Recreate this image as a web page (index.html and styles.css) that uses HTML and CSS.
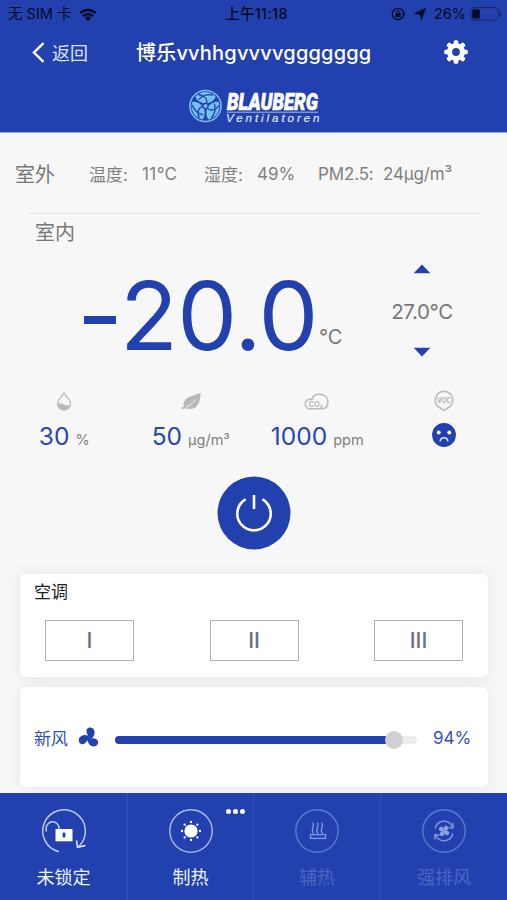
FILE: index.html
```html
<!DOCTYPE html>
<html lang="zh-CN">
<head>
<meta charset="utf-8">
<title>博乐</title>
<link rel="stylesheet" href="styles.css">
</head>
<body>
<div class="app">
  <header class="header">
    <div class="status">
      <div class="status-left">
        <span class="carrier">无 SIM 卡</span>
        <svg class="wifi" width="18" height="13" viewBox="0 0 18 13"><g fill="none" stroke="#050b22" stroke-width="2.4"><path d="M1.2 5.2A11 11 0 0 1 16.8 5.2"/><path d="M4 8.2a7 7 0 0 1 10 0"/></g><path d="M9 13L5.9 9.900a4.400 4.400 0 0 1 6.200 0z" fill="#050b22"/></svg>
      </div>
      <div class="status-time">上午11:18</div>
      <div class="status-right">
        <svg width="15" height="14" viewBox="0 0 15 14"><circle cx="7" cy="7" r="5.7" fill="none" stroke="#050b22" stroke-width="1.3"/><rect x="4.4" y="6" width="5.2" height="4" rx=".6" fill="#050b22"/><path d="M5.4 6V5a1.6 1.6 0 0 1 3.2 0v1" fill="none" stroke="#050b22"/><path d="M10.7 6.2h4.2l-2.1 2.800z" fill="#050b22"/></svg>
        <svg class="locate" width="12" height="12" viewBox="0 0 12 12"><path d="M11.700.3L7.300 11.800 6.300 6.400.3 5.500z" fill="#050b22" stroke="#050b22" stroke-width=".6"/></svg>
        <span class="percent">26%</span>
        <svg width="32" height="14" viewBox="0 0 32 14"><rect x=".6" y=".6" width="28" height="12.6" rx="3.4" fill="none" stroke="#17265f" stroke-width="1"/><rect x="2.2" y="2.2" width="7.6" height="9.4" rx="1.5" fill="#050b22"/><path d="M30 4.7c2 .8 2 3.800 0 4.600z" fill="#17265f"/></svg>
      </div>
    </div>
    <div class="titlebar">
      <div class="back">
        <svg width="13" height="21" viewBox="0 0 13 21"><path d="M11.500 1.200L2 10.500l9.500 9.300" fill="none" stroke="#fff" stroke-width="2.400"/></svg>
        <span>返回</span>
      </div>
      <h1 class="title">博乐vvhhgvvvvggggggg</h1>
      <svg class="gear" width="24" height="24" viewBox="-12 -12 24 24"><g fill="#fff"><g id="teeth"><rect x="-2.300" y="-11.800" width="4.600" height="23.600" rx="1.500"/><rect x="-11.800" y="-2.300" width="23.600" height="4.600" rx="1.500"/></g><use href="#teeth" transform="rotate(45)"/><circle r="9"/></g><circle r="3.900" fill="#2341ae"/></svg>
    </div>
    <div class="brand">
      <svg width="132" height="36" viewBox="0 0 132 36">
        <circle cx="17.500" cy="18" r="15.600" fill="none" stroke="#75c0ed" stroke-width="1.500"/>
        <g fill="#75c0ed">
          <path id="blade" d="M17.500 16C11.500 14.500 7.500 11 7.500 8.500 10 5.500 14 4 17.500 4s7.500 1.500 10 4.500c0 2.500-4 6-10 7.500z"/>
          <use href="#blade" transform="rotate(120 17.500 18)"/>
          <use href="#blade" transform="rotate(240 17.500 18)"/>
        </g>
        <g fill="none" stroke="#2341ae" stroke-width="1.300">
          <path id="seam" d="M10 6.500C15.500 7 20 10.500 18.500 16M11 11.500c3-3.500 8-5.500 14-4.500"/>
          <use href="#seam" transform="rotate(120 17.500 18)"/>
          <use href="#seam" transform="rotate(240 17.500 18)"/>
        </g>
        <circle cx="17.500" cy="18" r="2.600" fill="#75c0ed" stroke="#2341ae" stroke-width="1.200"/>
        <text class="brand-name" x="39" y="22" textLength="91" lengthAdjust="spacingAndGlyphs">BLAUBERG</text>
        <path d="M39 24.200h91" stroke="#c9d8f4" stroke-width=".8"/>
        <text class="brand-sub" x="38" y="34" textLength="93.500">Ventilatoren</text>
      </svg>
    </div>
  </header>

  <main class="main">
    <section class="outdoor">
      <span class="room">室外</span>
      <span>温度:</span><span class="c-temp">11°C</span>
      <span>湿度:</span><span>49%</span>
      <span class="c-pm">PM2.5:</span><span class="c-pmv">24µg/m³</span>
    </section>
    <section class="indoor">
      <div class="room indoor-name">室内</div>
      <div class="temps">
        <div class="current"><span class="big"><i class="minus"></i>20.0</span><span class="deg">°C</span></div>
        <div class="target">
          <svg width="18" height="10" viewBox="0 0 18 10"><path d="M.7 9.300L9 .6l8.300 8.700z" fill="#2341ae"/></svg>
          <span>27.0°C</span>
          <svg width="18" height="10" viewBox="0 0 18 10"><path d="M.7.7L9 9.400 17.300.7z" fill="#2341ae"/></svg>
        </div>
      </div>
    </section>

    <section class="metrics">
      <div class="metric">
        <svg width="26" height="22" viewBox="0 0 26 22"><path d="M13 3C10.500 6.800 6.500 10 6.500 13.500a6.500 6.500 0 0 0 13 0C19.500 10 15.500 6.800 13 3z" fill="none" stroke="#c2c2c2" stroke-width="1.500"/><path d="M7 13.500c3.500-1 7 3 12 1.500-.8 3.200-3 5-6 5s-5.700-2-6-6.500z" fill="#b9b9b9"/></svg>
        <p><b>30</b><small>%</small></p>
      </div>
      <div class="metric">
        <svg width="26" height="22" viewBox="0 0 26 22"><path d="M22.700 2.800C22.300 10 20.500 19 12.500 19c-2 0-3.500-.4-4.700-1-1.500 1-3 1.300-4.500 1l.2-1.700c1.200 0 1.800-.2 2.500-.7C4.200 12.500 7.500 8.500 11.500 6.700c4-1.700 7.500-1.600 11.200-3.900z" fill="#b8b8b8"/><path d="M8 17c4-1.500 7-4 9.500-7.500" fill="none" stroke="#f7f7f7"/></svg>
        <p><b>50</b><small>µg/m³</small></p>
      </div>
      <div class="metric">
        <svg width="26" height="22" viewBox="0 0 26 22"><path d="M6.300 18.800a4.800 4.800 0 0 1-.5-9.600c.9-.1 1.500 0 2.200.3C8.600 6.300 11.200 4.200 15 4.200c5.400 0 9 3 9 7.600 0 4-2 7-6 7z" fill="none" stroke="#bababa" stroke-width="1.500"/><text class="icon-text" x="4.800" y="16.500" textLength="14">CO₂</text></svg>
        <p><b>1000</b><small>ppm</small></p>
      </div>
      <div class="metric voc">
        <svg width="26" height="22" viewBox="0 0 26 22"><path d="M13 1.200a8.900 8.900 0 0 1 2.800 17.300L13 20.300l-2.800-1.800A8.900 8.900 0 0 1 13 1.200z" fill="none" stroke="#bababa" stroke-width="1.500"/><text class="icon-text" x="6" y="12.600" textLength="14" lengthAdjust="spacingAndGlyphs">VOC</text></svg>
        <svg class="face" width="24" height="24" viewBox="0 0 24 24"><circle cx="12" cy="12" r="11.900" fill="#2341ae"/><circle cx="6.700" cy="9.500" r="2" fill="#fff"/><circle cx="17.300" cy="9.500" r="2" fill="#fff"/><path d="M8.200 18.400c0-5 7.600-5 7.600 0" fill="none" stroke="#dce3f8" stroke-width="1.500"/></svg>
      </div>
    </section>

    <div class="power">
      <svg width="74" height="74" viewBox="-37 -37 74 74"><circle r="36.500" fill="#2341ae"/><path d="M-9.300-13.200a16.700 16.700 0 1 0 18.600 0" fill="none" stroke="#fff" stroke-width="2.600" stroke-linecap="round"/><path d="M0-18v14" stroke="#fff" stroke-width="2.600"/></svg>
    </div>

    <section class="card ac">
      <h2>空调</h2>
      <div class="levels"><button>I</button><button>II</button><button>III</button></div>
    </section>
    <section class="card fresh">
      <span class="fresh-name">新风</span>
      <svg width="22" height="22" viewBox="-11 -11 22 22"><g fill="#2341ae"><path id="fan" d="M.8 1.200C-.3-1.500-2.600-4.500-2.600-7-2.500-9.800-.3-11 2-10.400 5.200-9.600 6.200-6.500 5.200-3.300 4.500-.8 2.700.4.8 1.200z"/><use href="#fan" transform="rotate(120)"/><use href="#fan" transform="rotate(240)"/></g></svg>
      <div class="slider"><div class="fill"></div><div class="knob"></div></div>
      <span class="fresh-value">94%</span>
    </section>
  </main>

  <nav class="nav">
    <div class="tab">
      <svg width="46" height="46" viewBox="-23 -23 46 46"><g fill="none" stroke="#bdc9ef" stroke-width="1.500"><path d="M-5 20.800A21.300 21.300 0 1 1 15 15.300"/><path d="M12.500 9.500l1 6.800 8-1.800" stroke="#e6ecff"/><path d="M-17.800.5v-3.300a6.400 6.400 0 0 1 12.800 0V1"/></g><rect x="-8.500" y="-2" width="17" height="12.300" fill="#fff"/><ellipse cy="4" rx="1.600" ry="2.700" fill="#2341ae"/></svg>
      <span>未锁定</span>
    </div>
    <div class="tab">
      <svg width="46" height="46" viewBox="-23 -23 46 46"><circle r="21.200" fill="none" stroke="#a9b8e8" stroke-width="1.400"/><circle r="6.600" fill="#fff"/><g fill="#fff"><g id="rays"><circle cy="-9" r="1.150"/><circle cy="9" r="1.150"/><circle cx="-9" r="1.150"/><circle cx="9" r="1.150"/></g><use href="#rays" transform="rotate(45)"/></g></svg>
      <span>制热</span>
      <i class="more"></i>
    </div>
    <div class="tab off">
      <svg width="46" height="46" viewBox="-23 -23 46 46"><g fill="none" stroke="#5f79cd" stroke-width="1.400"><circle r="21.200"/><g stroke="#8096dd"><rect x="-6.500" y="3.600" width="15" height="3.800"/><path d="M-3.500 2.500c-3.500-4 1.600-6.500-.5-11M1 2.500c-3.500-4 1.600-6.500-.5-11M5.500 2.500c-3.500-4 1.600-6.500-.5-11"/></g></g></svg>
      <span>辅热</span>
    </div>
    <div class="tab off">
      <svg width="46" height="46" viewBox="-23 -23 46 46"><circle r="21.200" fill="none" stroke="#5f79cd" stroke-width="1.400"/><g fill="none" stroke="#7c93dc" stroke-width="1.500"><path d="M-8.800-2.500A9 9 0 0 1 8.300-4.200M9-8v5l-4.500-.6M8.800 2.500A9 9 0 0 1-8.300 4.200M-9 8.600v-5l4.500.6"/></g><g fill="#8ea3e4" transform="rotate(40)"><path id="vane" d="M0 0C-3-1.500-3.500-4.500-1-5.800 2-6.200 3-3 0 0z"/><use href="#vane" transform="rotate(90)"/><use href="#vane" transform="rotate(180)"/><use href="#vane" transform="rotate(270)"/></g></svg>
      <span>强排风</span>
    </div>
  </nav>
</div>
</body>
</html>
```

FILE: styles.css
```css
* { box-sizing: border-box; }
body { margin: 0; background: #f7f7f7; font-family: Inter, "Noto Sans CJK SC", sans-serif; }
svg { display: block; flex: none; overflow: visible; }
h1, h2, p { margin: 0; }
.app { width: 507px; height: 900px; display: flex; flex-direction: column; overflow: hidden; }

.header { height: 133px; background: #2341ae; border-bottom: 1px solid #91a2da; flex: none; }
.status { height: 28px; display: grid; grid-template-columns: 1fr auto 1fr; align-items: center; color: #050b22; font-size: 14.500px; padding: 0 5px 0 8px; line-height: 28px; }
.status-left, .status-right { display: flex; align-items: center; }
.status-left { gap: 8px; }
.status-right { justify-content: flex-end; }
.status-time { font-weight: 500; font-size: 14.500px; padding-left: 3px; letter-spacing: .3px; }
.locate { margin: 0 8px 0 8px; }
.percent { margin-right: 4px; font-size: 14.500px; }
.titlebar { height: 48px; display: grid; grid-template-columns: 104px 268px 1fr; align-items: center; padding-left: 32px; color: #fff; }
.back { display: flex; align-items: center; gap: 7px; font-size: 18px; color: #dde4fa; }
.title { font-size: 20px; font-weight: 500; line-height: 28px; padding-top: 2px; white-space: nowrap; letter-spacing: .2px; }
.gear { margin-left: 40px; }
.brand { display: flex; padding: 12px 0 0 188px; }
.brand-name { font: italic 900 24px "Roboto", sans-serif; fill: #fff; stroke: #fff; stroke-width: .6px; }
.brand-sub { font: italic 400 11.500px "Liberation Sans", sans-serif; fill: #dce6fb; stroke: #dce6fb; stroke-width: .2px; }

.main { flex: 1; }
.outdoor { height: 80px; margin: 0 28px 0 15px; padding-top: 1px; display: grid; grid-template-columns: 74px 53px 62px 53px 61px 65px auto; align-items: center; font-size: 17px; color: #808080; white-space: nowrap; }
.outdoor .c-temp { letter-spacing: .4px; }
.outdoor .c-pm, .outdoor .c-pmv { letter-spacing: -.15px; }
.room { font-size: 20px; color: #777; }
.indoor { margin: 0 27px 0 28px; border-top: 1px solid #e3e3e3; height: 170px; }
.indoor-name { padding: 4px 0 0 7px; line-height: 30px; height: 34px; }
.temps { display: flex; justify-content: space-between; }
.current { display: flex; align-items: flex-end; height: 118px; padding-left: 56px; }
.big { display: flex; align-items: center; font-size: 95px; line-height: 100px; color: #2341ae; letter-spacing: -.6px; }
.minus { width: 32px; height: 8px; margin: 7px 4px 0 0; background: #2341ae; }
.deg { font-size: 20px; color: #777; line-height: 30px; margin: 0 0 14px 1px; }
.target { display: flex; flex-direction: column; align-items: center; width: 80px; margin: 16px 18px 0 0; font-size: 20.500px; line-height: 24px; color: #777; }
.target span { margin: 26px 0 23px; white-space: nowrap; letter-spacing: -.4px; }

.metrics { display: grid; grid-template-columns: repeat(4, 1fr); padding: 7px 0 0 1px; height: 92px; }
.metric { display: flex; flex-direction: column; align-items: center; }
.metric p { display: flex; align-items: baseline; gap: 6px; line-height: 30px; margin-top: 9px; color: #808080; }
.metric b { font-weight: 400; font-size: 24.500px; color: #2a46b0; }
.metric small { font-size: 14.500px; }
.face { margin-top: 11px; }
.icon-text { font: 700 7px Inter, sans-serif; fill: #b5b5b5; }
.power { height: 99px; padding-top: 1px; display: flex; justify-content: center; }

.card { width: 468px; margin: 0 19px 10px 20px; background: #fff; border-radius: 6px; box-shadow: 0 0 16px rgba(0, 0, 0, .07); }
.ac { height: 103px; padding: 4px 25px 0; }
.ac h2 { margin-left: -11px; font-size: 17px; font-weight: 400; line-height: 28px; color: #222; }
.levels { display: flex; justify-content: space-between; padding-top: 14px; }
.levels button { width: 89px; height: 41px; border: 1px solid #b1b1b1; background: #fff; font: 500 21.500px Inter, sans-serif; color: #6c7080; padding: 0 0 2px; }
.fresh { height: 100px; display: flex; align-items: center; padding: 1px 0 0 14px; margin-bottom: 6px; color: #3550b6; font-size: 17px; }
.fresh-name { width: 44px; }
.slider { position: relative; width: 302px; height: 8px; margin: 4px 16px 0 15px; border-radius: 4px; background: #ececea; }
.fill { width: 280px; height: 8px; border-radius: 4px; background: #2341ae; }
.knob { position: absolute; left: 270px; top: -5px; width: 18px; height: 18px; border-radius: 50%; background: #d0d0d0; }

.nav { height: 107px; flex: none; display: grid; grid-template-columns: 128px 126px 127px 126px; background: #2341ae; color: #edf1ff; }
.tab { position: relative; display: flex; flex-direction: column; align-items: center; padding-top: 15px; font-size: 18px; border-right: 1px solid #3450b6; }
.tab:last-child { border-right: 0; }
.tab span { margin-top: 10px; line-height: 28px; }
.off { color: #4a66c2; }
.more { position: absolute; left: 105px; top: 16px; width: 5px; height: 5px; border-radius: 50%; background: #fff; box-shadow: -7px 0 #fff, 7px 0 #fff; }
```
